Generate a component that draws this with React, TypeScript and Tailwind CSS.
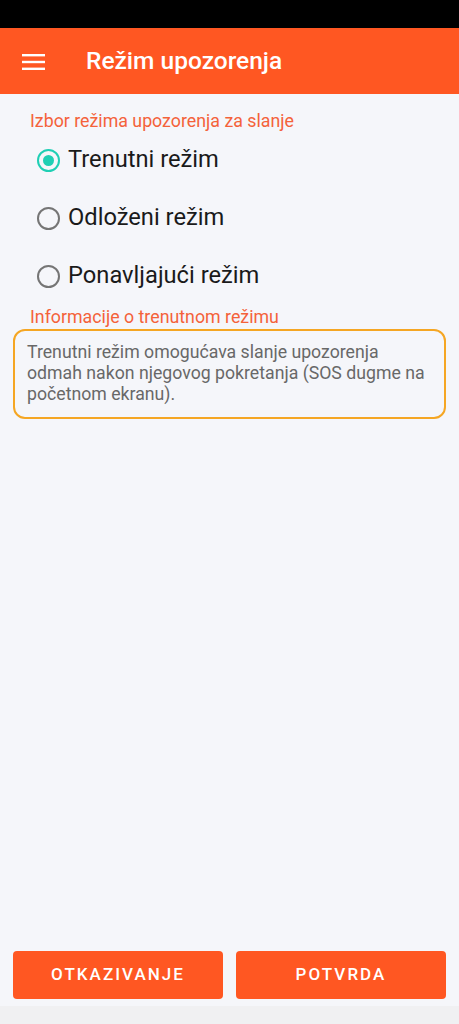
import { useState } from "react";

const modes = ["Trenutni režim", "Odloženi režim", "Ponavljajući režim"];

export default function App() {
  const [selected, setSelected] = useState(0);

  return (
    <div className="flex h-[1024px] w-full flex-col bg-[#f5f6fa] font-['Roboto',sans-serif]">
      <div className="h-[28px] bg-black" />
      <header className="flex h-[66px] items-center bg-[#ff5722] pl-[22px]">
        <svg width="24" height="18" viewBox="0 0 24 18" className="mt-[1px]">
          <rect x="0" y="1" width="23" height="2.4" fill="white" />
          <rect x="0" y="7.8" width="23" height="2.4" fill="white" />
          <rect x="0" y="14.6" width="23" height="2.4" fill="white" />
        </svg>
        <h1 className="ml-[40px] text-[24.5px] font-medium text-white">Režim upozorenja</h1>
      </header>

      <main className="flex flex-1 flex-col px-[13px]">
        <p className="mt-[14px] pl-[17px] text-[17.8px] leading-[26px] text-[#f4623a]">Izbor režima upozorenja za slanje</p>
        <div className="mt-[4px] flex flex-col gap-[14px] pl-[24px]">
          {modes.map((m, i) => (
            <button
              key={m}
              onClick={() => setSelected(i)}
              className="flex h-[44px] items-center text-left"
            >
              {selected === i ? (
                <span className="flex h-[23px] w-[23px] items-center justify-center rounded-full border-[2.5px] border-[#1fcfb4]">
                  <span className="h-[11px] w-[11px] rounded-full bg-[#1fcfb4]" />
                </span>
              ) : (
                <span className="h-[23px] w-[23px] rounded-full border-[2.5px] border-[#757575]" />
              )}
              <span className="ml-[8px] text-[23.7px] text-[#1a1a1a]">{m}</span>
            </button>
          ))}
        </div>

        <p className="mt-[7px] pl-[17px] text-[17.8px] leading-[24px] text-[#f4623a]">Informacije o trenutnom režimu</p>
        <div className="rounded-[12px] border-2 border-[#f5a623] px-[12px] pb-[12px] pt-[11px]">
          <p className="text-[17.7px] leading-[21px] text-[#686868]">
            Trenutni režim omogućava slanje upozorenja odmah nakon njegovog pokretanja (SOS dugme na početnom ekranu).
          </p>
        </div>

        <div className="mt-auto mb-[7px] grid grid-cols-2 gap-[13px]">
          <button className="h-[48px] rounded-[4px] bg-[#ff5722] text-[17px] font-medium tracking-[0.12em] text-white">
            OTKAZIVANJE
          </button>
          <button className="h-[48px] rounded-[4px] bg-[#ff5722] text-[17px] font-medium tracking-[0.12em] text-white">
            POTVRDA
          </button>
        </div>
      </main>
      <div className="h-[18px] bg-[#f0f0f2]" />
    </div>
  );
}
